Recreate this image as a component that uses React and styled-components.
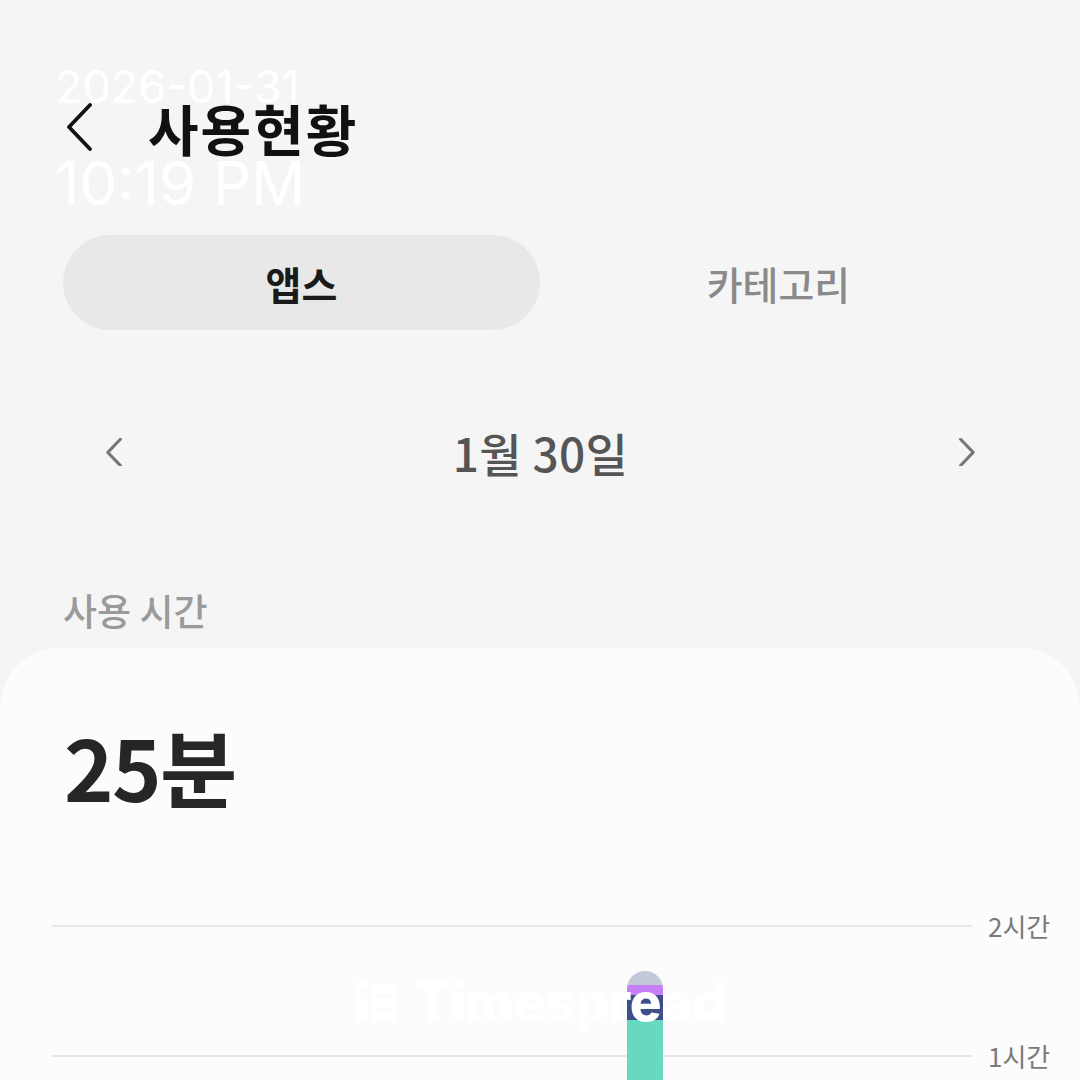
import React from "react";
import styled, { createGlobalStyle } from "styled-components";

const Global = createGlobalStyle`
  html, body { margin: 0; padding: 0; background: #f5f5f5; }
  body { font-family: "Noto Sans CJK KR", "Noto Sans", sans-serif; }
  #root { width: 1080px; height: 1080px; }
`;

const Page = styled.div`
  position: relative;
  width: 1080px;
  height: 1080px;
  overflow: hidden;
  background: #f5f5f5;
  display: flex;
  flex-direction: column;
`;

const Header = styled.header`
  display: flex;
  align-items: center;
  height: 60px;
  margin-top: 97px;
  padding-left: 66px;
  gap: 52px;
`;

const IconButton = styled.button`
  border: 0;
  background: none;
  padding: 0;
  display: flex;
  align-items: center;
  justify-content: center;
  width: ${(p) => p.$w || 30}px;
  height: ${(p) => p.$h || 48}px;
  color: ${(p) => p.$color || "#111"};
`;

const Title = styled.h1`
  margin: 0;
  font-size: 55px;
  font-weight: 700;
  color: #111;
  letter-spacing: 2px;
  line-height: 1;
`;

const Tabs = styled.div`
  display: grid;
  grid-template-columns: 1fr 1fr;
  margin: 78px 63px 0;
  height: 95px;
`;

const Tab = styled.div`
  display: flex;
  align-items: center;
  justify-content: center;
  border-radius: 48px;
  background: ${(p) => (p.$active ? "#e8e8e8" : "transparent")};
  color: ${(p) => (p.$active ? "#1a1a1a" : "#8a8a8a")};
  font-size: 39px;
  font-weight: ${(p) => (p.$active ? 700 : 500)};
`;

const DateNav = styled.div`
  display: flex;
  align-items: center;
  justify-content: space-between;
  height: 80px;
  margin-top: 82px;
  padding: 0 105px 0 106px;
`;

const DateText = styled.div`
  font-size: 46px;
  font-weight: 500;
  color: #555;
  letter-spacing: 0.3px;
`;

const SectionLabel = styled.div`
  margin: 93px 0 0 63px;
  font-size: 37px;
  font-weight: 500;
  color: #9a9a9a;
  line-height: 50px;
`;

const Card = styled.section`
  flex: 1;
  margin-top: 13px;
  background: #fcfcfc;
  border-radius: 60px 60px 0 0;
  padding: 73px 0 0 0;
  display: flex;
  flex-direction: column;
`;

const Total = styled.div`
  margin-left: 64px;
  font-size: 84px;
  font-weight: 600;
  color: #262626;
  line-height: 90px;
  letter-spacing: -1.5px;
`;

const Chart = styled.div`
  position: relative;
  margin-top: 99px;
  display: flex;
  flex-direction: column;
  gap: 98px;
`;

const GridRow = styled.div`
  display: flex;
  align-items: center;
  height: 32px;
  padding-left: 52px;
  gap: 16px;
`;

const GridLine = styled.div`
  width: 920px;
  height: 2px;
  background: #e7e7e7;
`;

const AxisLabel = styled.span`
  font-size: 26px;
  color: #7a7a7a;
  line-height: 1;
`;

const Bar = styled.div`
  position: absolute;
  bottom: -200px;
  width: 36px;
  border-radius: 18px 18px 0 0;
  overflow: hidden;
  display: flex;
  flex-direction: column;
`;

const Segment = styled.div`
  height: ${(p) => p.$h}px;
  background: ${(p) => p.$c};
  flex-shrink: 0;
`;

const Watermark = styled.div`
  position: absolute;
  left: 355px;
  top: 974px;
  display: flex;
  align-items: center;
  gap: 18px;
  color: #ffffff;
  font-family: Inter, "Liberation Sans", sans-serif;
  font-weight: 800;
  font-size: 53px;
  letter-spacing: -0.3px;
  line-height: 56px;
  pointer-events: none;
`;

const Stamp = styled.div`
  position: absolute;
  left: 55px;
  top: 60px;
  color: #ffffff;
  font-family: Inter, "Liberation Sans", sans-serif;
  font-weight: 400;
  display: flex;
  flex-direction: column;
  pointer-events: none;
`;

const StampDate = styled.div`
  font-size: 45px;
  line-height: 54px;
`;

const StampTime = styled.div`
  font-size: 60px;
  line-height: 66px;
  margin-top: 36px;
`;

const Chevron = ({ dir = "left", size = 30, stroke = 3.5 }) => (
  <svg width={size} height={size * 1.6} viewBox="0 0 30 48" fill="none">
    <polyline
      points={dir === "left" ? "24,2 3,24 24,46" : "6,2 27,24 6,46"}
      stroke="currentColor"
      strokeWidth={stroke}
      strokeLinecap="round"
      strokeLinejoin="round"
    />
  </svg>
);

const segments = [
  { h: 14, c: "#c3c9d8" },
  { h: 10, c: "#c580f8" },
  { h: 25, c: "#3e4e8b" },
  { h: 260, c: "#66d9c0" },
];

export default function App() {
  return (
    <>
      <Global />
      <Page>
        <Header>
          <IconButton $w={30} $h={48}>
            <Chevron dir="left" size={30} stroke={3.8} />
          </IconButton>
          <Title>사용현황</Title>
        </Header>

        <Tabs>
          <Tab $active>앱스</Tab>
          <Tab>카테고리</Tab>
        </Tabs>

        <DateNav>
          <IconButton $w={18} $h={29} $color="#777">
            <Chevron dir="left" size={18} stroke={5} />
          </IconButton>
          <DateText>1월 30일</DateText>
          <IconButton $w={18} $h={29} $color="#777">
            <Chevron dir="right" size={18} stroke={5} />
          </IconButton>
        </DateNav>

        <SectionLabel>사용 시간</SectionLabel>

        <Card>
          <Total>25분</Total>
          <Chart>
            <GridRow>
              <GridLine />
              <AxisLabel>2시간</AxisLabel>
            </GridRow>
            <GridRow>
              <GridLine />
              <AxisLabel>1시간</AxisLabel>
            </GridRow>
            <Bar style={{ left: 627, top: 61 }}>
              {segments.map((s, i) => (
                <Segment key={i} $h={s.h} $c={s.c} />
              ))}
            </Bar>
          </Chart>
        </Card>

        <Watermark>
          <svg width="42" height="40" viewBox="0 0 42 40" fill="#fff">
            <rect x="0" y="0" width="12" height="8" rx="1" />
            <rect x="0" y="11" width="12" height="29" rx="1" />
            <rect x="16" y="3" width="26" height="10" rx="1" />
            <rect x="16" y="16" width="26" height="10" rx="1" />
            <rect x="16" y="29" width="26" height="11" rx="1" />
          </svg>
          <span>Timespread</span>
        </Watermark>

        <Stamp>
          <StampDate>2026-01-31</StampDate>
          <StampTime>10:19 PM</StampTime>
        </Stamp>
      </Page>
    </>
  );
}
